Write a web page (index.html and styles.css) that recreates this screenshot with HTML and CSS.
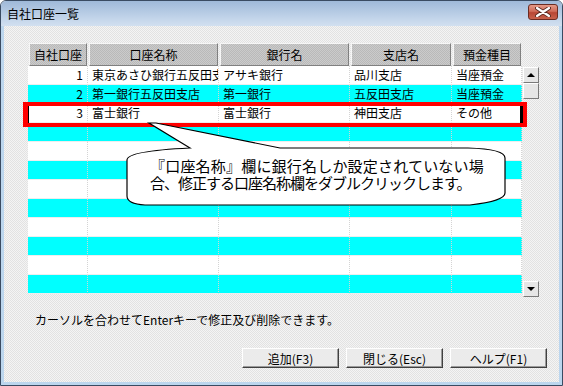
FILE: index.html
```html
<!DOCTYPE html>
<html lang="ja">
<head>
    <meta charset="UTF-8">
    <title>自社口座一覧</title>
    <link rel="stylesheet" href="styles.css">
</head>
<body>

<div class="window">
    <div class="titlebar">
        <span class="title">自社口座一覧</span>
        <div class="close">
            <svg width="16" height="10" viewBox="0 0 16 10">
                <path d="M2 1 L14 9 M14 1 L2 9" stroke="#5a2a20" stroke-width="4" stroke-linecap="round"/>
                <path d="M2 1 L14 9 M14 1 L2 9" stroke="#ffffff" stroke-width="2.2" stroke-linecap="round"/>
            </svg>
        </div>
    </div>

    <div class="body">
        <!-- 口座一覧 -->
        <div class="grid-wrap">
            <div class="grid">
                <div class="row head">
                    <div class="hcell">自社口座</div>
                    <div class="hcell">口座名称</div>
                    <div class="hcell">銀行名</div>
                    <div class="hcell">支店名</div>
                    <div class="hcell">預金種目</div>
                </div>
                <div class="row">
                    <div class="cell num">1</div>
                    <div class="cell">東京あさひ銀行五反田支店</div>
                    <div class="cell">アサキ銀行</div>
                    <div class="cell">品川支店</div>
                    <div class="cell">当座預金</div>
                </div>
                <div class="row alt">
                    <div class="cell num">2</div>
                    <div class="cell">第一銀行五反田支店</div>
                    <div class="cell">第一銀行</div>
                    <div class="cell">五反田支店</div>
                    <div class="cell">当座預金</div>
                </div>
                <div class="row">
                    <div class="cell num">3</div>
                    <div class="cell">富士銀行</div>
                    <div class="cell">富士銀行</div>
                    <div class="cell">神田支店</div>
                    <div class="cell">その他</div>
                </div>
                <div class="row alt"><div class="cell"></div><div class="cell"></div><div class="cell"></div><div class="cell"></div><div class="cell"></div></div>
                <div class="row"><div class="cell"></div><div class="cell"></div><div class="cell"></div><div class="cell"></div><div class="cell"></div></div>
                <div class="row alt"><div class="cell"></div><div class="cell"></div><div class="cell"></div><div class="cell"></div><div class="cell"></div></div>
                <div class="row"><div class="cell"></div><div class="cell"></div><div class="cell"></div><div class="cell"></div><div class="cell"></div></div>
                <div class="row alt"><div class="cell"></div><div class="cell"></div><div class="cell"></div><div class="cell"></div><div class="cell"></div></div>
                <div class="row"><div class="cell"></div><div class="cell"></div><div class="cell"></div><div class="cell"></div><div class="cell"></div></div>
                <div class="row alt"><div class="cell"></div><div class="cell"></div><div class="cell"></div><div class="cell"></div><div class="cell"></div></div>
                <div class="row"><div class="cell"></div><div class="cell"></div><div class="cell"></div><div class="cell"></div><div class="cell"></div></div>
                <div class="row alt"><div class="cell"></div><div class="cell"></div><div class="cell"></div><div class="cell"></div><div class="cell"></div></div>
            </div>

            <div class="scrollbar">
                <div class="sbtn"><span class="arrow up"></span></div>
                <div class="sbtn thumb"></div>
                <div class="track"></div>
                <div class="sbtn"><span class="arrow down"></span></div>
            </div>
        </div>

        <p class="status">カーソルを合わせてEnterキーで修正及び削除できます。</p>

        <div class="buttons">
            <button class="btn">追加(F3)</button>
            <button class="btn">閉じる(Esc)</button>
            <button class="btn">ヘルプ(F1)</button>
        </div>
    </div>

    <!-- 注釈 -->
    <div class="highlight"></div>
    <div class="callout">
        <svg class="bubble" width="381" height="84" viewBox="126 122 381 84">
            <path d="M190 148 L149 123 L156 123 L280 148 L468 148 Q505 149 505 158 L505 193 Q505 201 470 205 L145 205 Q127 204 127 196 L127 160 Q127 151 190 148 Z"
                  fill="#ffffff" stroke="#000000" stroke-width="1.2"/>
        </svg>
        <div class="callout-text">
            <span class="line1">『口座名称』欄に銀行名しか設定されていない場</span>
            <span class="line2">合、修正する口座名称欄をダブルクリックします。</span>
        </div>
    </div>
</div>

</body>
</html>
```

FILE: styles.css
```css
body {
    margin: 0;
    font-family: "Noto Sans CJK JP", sans-serif;
    font-size: 12px;
    color: #000000;
}

.window {
    position: relative;
    width: 563px;
    height: 386px;
    box-sizing: border-box;
    border: 1px solid #3a4b62;
    border-radius: 6px 6px 0 0;
    overflow: hidden;
    display: flex;
    flex-direction: column;
}

.titlebar {
    height: 25px;
    flex: none;
    display: flex;
    align-items: center;
    justify-content: space-between;
    padding: 0 4px 0 6px;
    background: linear-gradient(#9fb9d9, #c3d5ea 70%, #d2e0f0);
}

.title {
    font-size: 12px;
    line-height: 14px;
}

.close {
    width: 30px;
    height: 16px;
    margin-top: -4px;
    box-sizing: border-box;
    border: 1px solid #6b2c22;
    border-radius: 3px;
    background: linear-gradient(#e59a88, #cf6b58 45%, #b84634 55%, #c8624c);
    display: flex;
    align-items: center;
    justify-content: center;
}

.body {
    flex: 1;
    border: 3px solid #bcd6ee;
    border-top: none;
    background-color: #ececec;
    background-image: repeating-conic-gradient(#f4f4f4 0 25%, #e2e2e2 0 50%);
    background-size: 2px 2px;
}

.grid-wrap {
    display: flex;
    margin: 17px 0 0 24px;
    height: 254px;
}

.grid {
    width: 494px;
}

.row {
    display: grid;
    grid-template-columns: 60px 131px 131px 102px 70px;
    height: 19px;
    background-color: #ffffff;
}

.row.alt {
    background-color: #00ffff;
}

.row.head {
    height: 23px;
    background: none;
}

.hcell {
    margin: 0 1px 0 1px;
    box-sizing: border-box;
    border: 1px solid;
    border-color: #f6f6f6 #808080 #808080 #f6f6f6;
    background-color: #c4c4c4;
    background-image: repeating-conic-gradient(#cbcbcb 0 25%, #b9b9b9 0 50%);
    background-size: 2px 2px;
    text-align: center;
    line-height: 21px;
}

.cell {
    box-sizing: border-box;
    border-right: 1px dotted #d4d4d4;
    border-bottom: 1px solid #eeeeee;
    padding-left: 4px;
    line-height: 18px;
    white-space: nowrap;
    overflow: hidden;
}

.cell.num {
    text-align: right;
    padding: 0 4px 0 0;
}

.scrollbar {
    width: 16px;
    margin: 24px 0 0 1px;
    height: 230px;
    display: flex;
    flex-direction: column;
}

.sbtn {
    height: 16px;
    flex: none;
    box-sizing: border-box;
    border: 1px solid;
    border-color: #ffffff #7a7a7a #7a7a7a #ffffff;
    background-color: #e6e6e6;
    display: flex;
    align-items: center;
    justify-content: center;
}

.track {
    flex: 1;
}

.arrow {
    width: 0;
    height: 0;
    border-left: 4px solid transparent;
    border-right: 4px solid transparent;
}

.arrow.up {
    border-bottom: 4px solid #000000;
}

.arrow.down {
    border-top: 4px solid #000000;
}

.status {
    margin: 15px 0 0 31px;
    line-height: 16px;
}

.buttons {
    display: flex;
    justify-content: flex-end;
    gap: 7px;
    margin-top: 20px;
    padding-right: 12px;
}

.btn {
    width: 97px;
    height: 20px;
    padding: 0;
    font-family: inherit;
    font-size: 12px;
    color: #000000;
    background-color: #ebebeb;
    border: 1px solid;
    border-color: #ffffff #404040 #404040 #ffffff;
    box-shadow: inset -1px -1px 0 #9a9a9a;
    border-radius: 0;
}

.highlight {
    position: absolute;
    left: 22px;
    top: 101px;
    width: 504px;
    height: 25px;
    box-sizing: border-box;
    border: 4px solid #ff0000;
    border-left-width: 5px;
    box-shadow: inset 1px 0 0 #000000, inset -3px 0 0 #000000;
}

.callout {
    position: absolute;
    left: 125px;
    top: 121px;
    width: 381px;
    height: 84px;
}

.bubble {
    position: absolute;
    left: 0;
    top: 0;
}

.callout-text {
    position: relative;
    display: flex;
    flex-direction: column;
    align-items: flex-start;
    padding: 35px 0 0 24px;
    font-size: 15px;
    line-height: 17px;
    white-space: nowrap;
}

.line1 {
    letter-spacing: 0.2px;
}

.line2 {
    letter-spacing: -1px;
}
```
